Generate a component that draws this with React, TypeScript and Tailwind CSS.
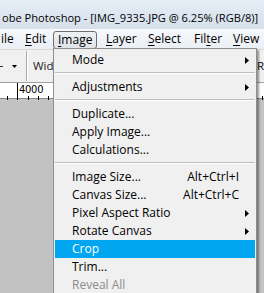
import React from "react";

type Item =
  | { label: string; shortcut?: string; sub?: boolean; hl?: boolean; disabled?: boolean }
  | "sep";

const items: Item[] = [
  { label: "Mode", sub: true },
  "sep",
  { label: "Adjustments", sub: true },
  "sep",
  { label: "Duplicate..." },
  { label: "Apply Image..." },
  { label: "Calculations..." },
  "sep",
  { label: "Image Size...", shortcut: "Alt+Ctrl+I" },
  { label: "Canvas Size...", shortcut: "Alt+Ctrl+C" },
  { label: "Pixel Aspect Ratio", sub: true },
  { label: "Rotate Canvas", sub: true },
  { label: "Crop", hl: true },
  { label: "Trim..." },
  { label: "Reveal All", disabled: true },
];

function Arrow({ color = "#000" }: { color?: string }) {
  return (
    <svg width="4" height="7" viewBox="0 0 4 7">
      <polygon points="0,0 4,3.5 0,7" fill={color} />
    </svg>
  );
}

function Ruler() {
  const minor = [7, 28, 38, 48, 58, 68, 78];
  return (
    <svg width="264" height="17" className="block">
      <line x1="17.5" y1="0" x2="17.5" y2="17" stroke="#000" />
      {minor.map((x) => (
        <line key={x} x1={x + 0.5} y1="13" x2={x + 0.5} y2="17" stroke="#000" />
      ))}
      <line x1="262.5" y1="13" x2="262.5" y2="17" stroke="#000" />
    </svg>
  );
}

export default function App() {
  return (
    <div className="relative w-[264px] h-[293px] overflow-hidden bg-[#c2c2c2] font-['Open_Sans',sans-serif] text-black">
      {/* title bar */}
      <div className="h-[29px] bg-gradient-to-b from-[#e6edf5] to-[#d6e0eb] flex items-center pl-[2px] pt-[8px] text-[11.1px] whitespace-nowrap">
        obe Photoshop - [IMG_9335.JPG @ 6.25% (RGB/8)]
      </div>

      {/* menu bar */}
      <div className="h-[20px] bg-gradient-to-b from-[#f6f8fb] to-[#eaeff5] flex items-center text-[12px] whitespace-nowrap">
        <div className="w-[25px] pl-px">ile</div>
        <div className="w-[28px]">
          <span className="underline underline-offset-2">E</span>dit
        </div>
        <div className="w-[44px] h-[18px] mt-[2px] rounded-[3px] border border-[#6f6f6f] bg-gradient-to-b from-[#eef0f3] to-[#dfe3e8] flex items-center pl-[4px]">
          <span className="underline underline-offset-2">I</span>mage
        </div>
        <div className="w-[42px] ml-[9px]">
          <span className="underline underline-offset-2">L</span>ayer
        </div>
        <div className="w-[46px]">
          <span className="underline underline-offset-2">S</span>elect
        </div>
        <div className="w-[39px]">
          Fil<span className="underline underline-offset-2">t</span>er
        </div>
        <div>
          <span className="underline underline-offset-2">V</span>iew
        </div>
      </div>

      {/* options bar */}
      <div className="h-[33px] bg-[#f0f0f0] border-t border-[#d8d8d8] flex items-center text-[11.5px] whitespace-nowrap">
        <div className="w-[3px] h-px bg-[#333] mt-[1px]" />
        <div className="ml-[9px] mt-[1px]">
          <svg width="5" height="3" viewBox="0 0 5 3" className="block">
            <polygon points="0,0 5,0 2.5,3" fill="#000" />
          </svg>
        </div>
        <div className="ml-[9px] self-end mb-px w-px h-[30px] bg-[#a8a8a8] border-r border-white box-content" />
        <div className="ml-[5px] text-[#222]">Width:</div>
        <div className="ml-auto w-[7px] overflow-hidden text-[#111]">Re</div>
      </div>

      {/* ruler */}
      <div className="relative h-[17px] bg-white border-t border-[#a0a0a0] border-b border-b-[#888]">
        <Ruler />
        <div className="absolute left-[19px] top-[1px] text-[10px] leading-[11px] font-['DejaVu_Sans',sans-serif] tracking-[-0.3px]">
          4000
        </div>
      </div>

      {/* dropdown menu */}
      <div className="absolute left-[53px] top-[48px] w-[204px] border border-[#8e8e8e] bg-[#f0f0f0] px-px pt-[2px] shadow-[2px_2px_2px_rgba(0,0,0,0.4)] text-[12px]">
        {items.map((it, i) =>
          it === "sep" ? (
            <div key={i} className="h-[9px] pt-[3px]">
              <div className="h-px bg-[#bdbdbd]" />
              <div className="h-px bg-white" />
            </div>
          ) : (
            <div
              key={i}
              className={`h-[18px] flex items-center pl-[17px] whitespace-nowrap ${
                it.hl ? "bg-[#00a6f0] text-white" : it.disabled ? "text-[#8c8c8c]" : "text-black"
              }`}
            >
              <span className="flex-1">{it.label}</span>
              {it.shortcut && <span>{it.shortcut}</span>}
              <span className="w-[16px] pl-[6px] flex items-center">{it.sub && <Arrow />}</span>
            </div>
          )
        )}
      </div>
    </div>
  );
}
